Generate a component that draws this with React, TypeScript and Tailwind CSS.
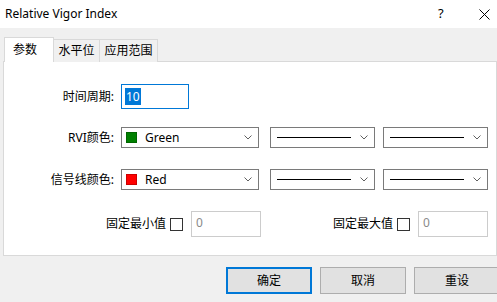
import React from 'react';

const ui = { fontFamily: '"Noto Sans", "Noto Sans CJK SC", sans-serif' };

const Chevron = () => (
  <svg width="8" height="5" viewBox="0 0 8 5" className="shrink-0">
    <path d="M0.5 0.5 L4 4 L7.5 0.5" fill="none" stroke="#606060" strokeWidth="1" />
  </svg>
);

const ColorSelect = ({ color, name }: { color: string; name: string }) => (
  <div className="w-[138px] h-[21px] border border-[#7a7a7a] bg-white flex items-center pl-[4px] pr-[6px]">
    <span className="w-[11px] h-[11px] border border-black/20" style={{ backgroundColor: color }} />
    <span className="ml-[8px] flex-1 text-[12px] text-black leading-none">{name}</span>
    <Chevron />
  </div>
);

const LineSelect = () => (
  <div className="w-[105px] h-[21px] border border-[#7a7a7a] bg-white flex items-center pl-[6px] pr-[6px]">
    <span className="w-[74px] h-px bg-black" />
    <span className="flex-1" />
    <Chevron />
  </div>
);

const Label = ({ children }: { children: React.ReactNode }) => (
  <div className="w-[111px] text-right text-[12px] text-black pr-px">{children}</div>
);

export default function App() {
  return (
    <div className="w-[497px] h-[302px] bg-[#f0f0f0] flex flex-col overflow-hidden select-none" style={ui}>
      {/* Title bar */}
      <div className="h-[28px] bg-white flex items-center shrink-0">
        <span className="pl-[5px] text-[12px] text-black flex-1">Relative Vigor Index</span>
        <span className="text-[13px] text-black w-[12px] mr-[29px]">?</span>
        <svg width="11" height="11" viewBox="0 0 11 11" className="mr-[7px]">
          <path d="M0.5 0.5 L10.5 10.5 M10.5 0.5 L0.5 10.5" stroke="#000" strokeWidth="1" />
        </svg>
      </div>

      {/* Tabs */}
      <div className="pt-[9px] pl-[4px] flex items-end h-[34px] shrink-0 relative z-10">
        <div className="w-[50px] h-[25px] bg-white border border-b-0 border-[#d9d9d9] text-[12px] text-black pl-[8px] pt-[3px]">参数</div>
        <div className="w-[46px] h-[23px] bg-[#f0f0f0] border border-l-0 border-b-0 border-[#d9d9d9] text-[12px] text-black text-center pt-[2px]">水平位</div>
        <div className="w-[58px] h-[23px] bg-[#f0f0f0] border border-l-0 border-b-0 border-[#d9d9d9] text-[12px] text-black text-center pt-[2px]">应用范围</div>
      </div>

      {/* Panel */}
      <div className="ml-[3px] w-[494px] h-[195px] -mt-px bg-white border border-[#d9d9d9] flex flex-col pt-[22px] shrink-0">
        <div className="flex items-center">
          <Label>时间周期:</Label>
          <div className="ml-[6px] w-[68px] h-[25px] border border-[#0078d7] bg-white flex items-center pl-[3px]">
            <span className="bg-[#0078d7] text-white text-[12px] leading-[17px] px-px">10</span>
          </div>
        </div>

        <div className="flex items-center mt-[18px]">
          <Label>RVI颜色:</Label>
          <div className="ml-[6px]"><ColorSelect color="#008000" name="Green" /></div>
          <div className="ml-[11px]"><LineSelect /></div>
          <div className="ml-[8px]"><LineSelect /></div>
        </div>

        <div className="flex items-center mt-[21px]">
          <Label>信号线颜色:</Label>
          <div className="ml-[6px]"><ColorSelect color="#ff0000" name="Red" /></div>
          <div className="ml-[11px]"><LineSelect /></div>
          <div className="ml-[8px]"><LineSelect /></div>
        </div>

        <div className="flex items-center mt-[21px] pl-[98px]">
          <div className="w-[64px] text-right text-[12px] text-black">固定最小值</div>
          <span className="ml-[4px] w-[13px] h-[13px] border border-[#333] bg-white" />
          <div className="ml-[8px] w-[70px] h-[26px] border border-[#cccccc] bg-white text-[12px] text-[#8a8a8a] pl-[4px] pt-[2px]">0</div>
          <div className="w-[132px] text-right text-[12px] text-black">固定最大值</div>
          <span className="ml-[4px] w-[13px] h-[13px] border border-[#333] bg-white" />
          <div className="ml-[8px] w-[70px] h-[26px] border border-[#cccccc] bg-white text-[12px] text-[#8a8a8a] pl-[4px] pt-[2px]">0</div>
        </div>
      </div>

      {/* Buttons */}
      <div className="flex gap-[8px] pl-[226px] mt-[11px] shrink-0">
        <button className="w-[86px] h-[27px] shrink-0 bg-[#e1e1e1] border-2 border-[#0078d7] text-[12px] text-black">确定</button>
        <button className="w-[86px] h-[27px] shrink-0 bg-[#e1e1e1] border border-[#adadad] text-[12px] text-black">取消</button>
        <button className="w-[86px] h-[27px] shrink-0 bg-[#e1e1e1] border border-[#adadad] text-[12px] text-black">重设</button>
      </div>
    </div>
  );
}
